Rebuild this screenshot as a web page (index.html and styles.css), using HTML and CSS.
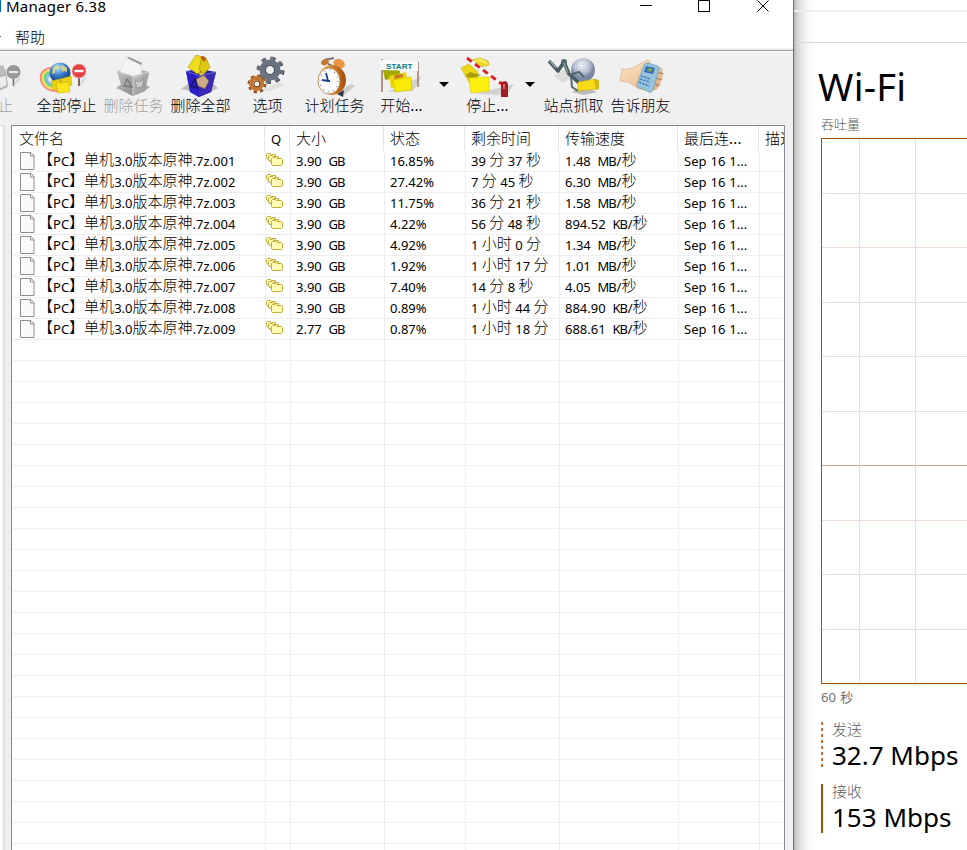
FILE: index.html
```html
<!DOCTYPE html>
<html lang="zh-CN">
<head>
<meta charset="utf-8">
<title>Manager 6.38</title>
<link rel="stylesheet" href="styles.css">
</head>
<body>
<div class="desktop">
<main class="window">
  <header class="titlebar">
    <i class="app-edge"></i><span class="title">Manager 6.38</span>
    <svg class="controls" width="130" height="16" viewBox="637 0 130 16" fill="none" stroke="#000" shape-rendering="crispEdges"><path d="M640 5.5h12M698.500 .5h11v11h-11z"/><path d="M757.500 .5l11 11M768.500 .5l-11 11" shape-rendering="auto"/></svg>
  </header>
  <nav class="menu"><i class="menu-edge"></i><span>帮助</span></nav>
  <div class="toolbar">
    <div class="tool cut disabled">
      <svg viewBox="0 55 33 44"><path d="M-4 67l7-2 3 6 2 16-9 4z" fill="#bbb"/><path d="M-1 77l7-2 1 10-7 4z" fill="#eee" stroke="#999" stroke-width=".6"/><path d="M13.500 77v9" stroke="#666" stroke-width="1.600"/><path d="M14 85l6-7" stroke="#d5d5d5" stroke-width="2"/><circle cx="13.500" cy="72" r="7" fill="#999"/><path d="M9 72h9" stroke="#e8e8e8" stroke-width="2.200"/></svg>
      <span>止</span>
    </div>
    <div class="tool">
      <svg viewBox="33 55 67 44"><defs><radialGradient id="globe" cx=".4" cy=".25" r=".7"><stop stop-color="#b9e4ff"/><stop offset=".5" stop-color="#3c82d2"/><stop offset="1" stop-color="#123879"/></radialGradient></defs><g fill="none" stroke-width="2.300"><path d="M55 68c-9-1-15 4-14 11 1 8 8 12 17 12" stroke="#f58c7c"/><path d="M55 70c-8-1-13 3-12 9 1 7 7 10 15 10" stroke="#f5e35c"/><path d="M55 72c-6-1-11 2-10 7 1 5 6 8 13 8" stroke="#72d36b"/><path d="M55 74c-5 0-8 1-8 5s5 7 11 7" stroke="#78bfe9"/></g><circle cx="60" cy="73" r="10.500" fill="url(#globe)"/><path d="M53 68q2-3 5-3l1 3-4 2 0 3-3 1zM63 65l4 3 0 4-3-1-2 1 0-3-2-2z" fill="#e3d982" fill-opacity=".85"/><path d="M51 81l9-2 1 9-8 2zM60 79l11-3 1 9-9 3z" fill="#e9cf13" stroke="#c0a500" stroke-width=".5"/><path d="M56 83l13-1 1 10-12 1z" fill="#f9e51b" stroke="#c7aa00" stroke-width=".5"/><path d="M80 85l6-8" stroke="#d5d5d5" stroke-width="2"/><path d="M79 77v9" stroke="#63443c" stroke-width="1.600"/><circle cx="79" cy="71" r="7" fill="#e54045" stroke="#f1a8a4" stroke-width=".7"/><path d="M74.500 71h9" stroke="#fff" stroke-width="2.400"/></svg>
      <span>全部停止</span>
    </div>
    <div class="tool disabled">
      <svg viewBox="100 55 67 44"><defs><linearGradient id="bin" y2="1"><stop stop-color="#c2c2c2"/><stop offset="1" stop-color="#8a8a8a"/></linearGradient></defs><path d="M116 88l7 3v-8zM144 84l6 3-7 5z" fill="#aaa"/><path d="M117 71l15-3 17 4-4 19-12 5-10-5z" fill="#aaa"/><path d="M120 70l7-13 14 6 1 13-9 3-13-5z" fill="#f4f4f4" stroke="#d2d2d2" stroke-width=".6"/><path d="M127 58l2-1 13 6-1 2z" fill="#999"/><path d="M117 71l16 5v20l-10-5z" fill="url(#bin)" fill-opacity=".9"/><path d="M133 76l16-4-4 19-12 5z" fill="url(#bin)" fill-opacity=".85"/><path d="M117 71l16 5 16-4M133 76v20" fill="none" stroke="#dedede" stroke-width=".8"/><path d="M124 86l3-7 5 8z" fill="none" stroke="#777" stroke-width="1.400"/><path d="M135 81l5 1 4-4-2 9-5 1z" fill="#ccc" stroke="#858585" stroke-width=".6"/></svg>
      <span>删除任务</span>
    </div>
    <div class="tool">
      <svg viewBox="167 55 67 44"><path d="M181 89l9 2-2-7zM212 83l6 5-7 4z" fill="#bbb"/><path d="M186 71l14-2 16 3-5 20-12 5-9-5z" fill="#2a269f"/><path d="M188 67l8-12 10 3-5 13-4 3z" fill="#eedc1c" stroke="#a08b00" stroke-width=".5"/><path d="M202 57l4 1 4 9-5 6-3 0-3-4z" fill="#e0c810" stroke="#8d7900" stroke-width=".5"/><path d="M200 57l4-1 2 4-2 2z" fill="#c2591a"/><path d="M186 71l13 5v21l-9-5z" fill="#2b20cb" fill-opacity=".96"/><path d="M199 76l17-4-5 20-12 5z" fill="#392bb8" fill-opacity=".96"/><path d="M197 72l4 4 4-3z" fill="#e6d219"/><path d="M186 71l13 5 17-4" fill="none" stroke="#7b76df" stroke-width=".8"/><path d="M191 86l4-7 3 9z" fill="none" stroke="#16105d" stroke-width="1.500"/><path d="M196 79l8-4 5 6-4 8-7-3z" fill="#cdab83" stroke="#5a456a" stroke-width=".7"/></svg>
      <span>删除全部</span>
    </div>
    <div class="tool">
      <svg viewBox="234 55 67 44"><path d="M259 91l21-9 6 3-17 6z" fill="#e0e0e0"/><g fill="none"><circle cx="271" cy="70.500" r="11.500" stroke="#454d57" stroke-width="4" stroke-dasharray="4 5.030"/><circle cx="270" cy="70" r="11.500" stroke="#69727e" stroke-width="4" stroke-dasharray="4 5.030"/><circle cx="270" cy="70" r="7.500" stroke="#69727e" stroke-width="6"/><circle cx="270" cy="70" r="4.500" stroke="#424952"/><circle cx="257" cy="84" r="8" stroke="#9b531e" stroke-width="3" stroke-dasharray="3.140 3.140"/><circle cx="256.500" cy="83.500" r="5.300" stroke="#c27532" stroke-width="4.500"/><circle cx="257" cy="84" r="3" stroke="#674022"/></g></svg>
      <span>选项</span>
    </div>
    <div class="tool">
      <svg viewBox="301 55 67 44"><defs><linearGradient id="brass"><stop stop-color="#ffc15d"/><stop offset="1" stop-color="#a54b0b"/></linearGradient></defs><path d="M337 93l14-9 4 2-11 9z" fill="#ccc"/><path d="M337 94l6 3 1-7z" fill="#333844"/><path d="M324 60l10-2M328 64l7 3" stroke="#777" stroke-width="2"/><ellipse cx="324.500" cy="62" rx="4" ry="3" fill="#c47632" transform="rotate(-25 325 61)"/><ellipse cx="339" cy="64" rx="6" ry="4.500" fill="#e99545" transform="rotate(25 340 64)"/><ellipse cx="332" cy="80" rx="14" ry="15" fill="url(#brass)"/><ellipse cx="329" cy="81" rx="11" ry="13" fill="#fff" stroke="#b57b4c" stroke-width=".8"/><ellipse cx="329" cy="81" rx="9" ry="11" fill="none" stroke="#777784" stroke-width="1.200" stroke-dasharray="1 4.270"/><path d="M326 73l2 8-6-1M327 81h3" fill="none" stroke="#173f93" stroke-width="1.800"/></svg>
      <span>计划任务</span>
    </div>
    <div class="tool">
      <svg viewBox="368 55 67 44"><path d="M387 92l35-16-9 15z" fill="#d2d2d2"/><path d="M383 70l16-3 2 10-16 3z" fill="#a3a900"/><path d="M389 76l17-4 2 13-17 3z" fill="#e9d513"/><path d="M395 75l8-1v3l-9 2z" fill="#c17a1f"/><path d="M393 80l18-3 1 13-17 2z" fill="#f9ea08" stroke="#cdb700" stroke-width=".6"/><path d="M382 59v33M418 62v25" stroke="#a98571" stroke-width="1.700"/><path d="M380 60l38 2v9l-37-1z" fill="#f8fbfb"/><text x="386" y="69" class="banner">START</text></svg>
      <span class="latin-dots">开始<em>...</em></span>
    </div>
    <div class="drop"></div>
    <div class="tool wide">
      <svg viewBox="454 55 67 44"><path d="M475 94l39-10-7 11z" fill="#d2d2d2"/><path d="M472 60l8-2 8 3 1 4-9 2z" fill="#e9da25" stroke="#c5b416" stroke-width=".7"/><path d="M475 61l4-1 8 4M479 59l8 3" fill="none" stroke="#fff778"/><path d="M461 68l8-4 9 8-1 8-8 2z" fill="#ead815" stroke="#c5b416" stroke-width=".6"/><path d="M465 76l5-4 11 3-9 4z" fill="#a99d0a"/><path d="M469 78l20-1v14l-18 2z" fill="#fff00e" stroke="#d5c600" stroke-width=".6"/><path d="M467 58l36 27" stroke="#fff" stroke-width="3"/><path d="M467 58l36 27" stroke="#d9262b" stroke-width="3" stroke-dasharray="6 4"/><path d="M501 82l5-1 2 3v13h-7z" fill="#a11b22"/><path d="M503 84h2v5h-2z" fill="#d66"/></svg>
      <span class="latin-dots">停止<em>...</em></span>
    </div>
    <div class="drop right"></div>
    <div class="tool">
      <svg viewBox="540 55 67 44"><defs><radialGradient id="ball" cx=".45" cy=".3"><stop stop-color="#f5f9ff"/><stop offset=".7" stop-color="#b3bdd1"/><stop offset="1" stop-color="#7b86a0"/></radialGradient><pattern id="dimples" width="3" height="3" patternUnits="userSpaceOnUse"><circle cx="1" cy="1" r=".5" fill="#909bb4"/></pattern></defs><path d="M554 76l12-7 8 8-12 6z" fill="#ddd"/><circle cx="583" cy="70" r="12" fill="url(#ball)"/><circle cx="583" cy="70" r="11.500" fill="url(#dimples)"/><path d="M572 92l9-6 16 6-13 3z" fill="#bbb"/><path d="M549 61l9 10 6-9 5 12 10 9" fill="none" stroke="#475a60" stroke-width="3.600" stroke-linejoin="round"/><circle cx="564" cy="62" r="3" fill="#526b70"/><path d="M564 63l4 10M550 61l6 7" stroke="#8fa5a6" stroke-width="1.200"/><path d="M569 75l10-3 5 5M571 77l1 10 6 4" fill="none" stroke="#526b70" stroke-width="2"/><path d="M578 82l18-3 1 10-19 2z" fill="#f7db17" stroke="#c2a918" stroke-width=".6"/><path d="M594 79l5 1v9l-3 1z" fill="#d1b719"/></svg>
      <span>站点抓取</span>
    </div>
    <div class="tool">
      <svg viewBox="607 55 67 44"><defs><linearGradient id="skin" y2="1"><stop stop-color="#ffe8c7"/><stop offset="1" stop-color="#dfac80"/></linearGradient></defs><path d="M622 69q9 1 14-3l9-5q4-2 5 1l-2 6 13 0q2 1 1 4 2 2 0 4 1 3-2 5 1 4-2 5 0 4-5 4l-14-1-11-7-8-1z" fill="url(#skin)" stroke="#d5a77e" stroke-width=".6"/><path d="M656 72l7 2M656 78l6 2M655 84l4 2" stroke="#b6764f" stroke-width="1.300"/><path d="M644 65q1-2 4-2l10 3q2 1 1 4l-6 20q-1 3-4 2l-11-5q-2-1-1-3z" fill="#98c4d9" stroke="#6f9cb2" stroke-width=".7"/><path d="M646 66l9 2-2 6-9-2z" fill="#3268c0"/><path d="M648 68l5 1-2 3-4-1z" fill="#7faa43"/><path d="M641 76l10 3M640 79l10 3M639 82l10 4" stroke="#437fc8" stroke-width="1.600" stroke-dasharray="2.400 1"/></svg>
      <span>告诉朋友</span>
    </div>
  </div>
  <section class="content">
    <aside class="side"></aside>
    <div class="list" id="list">
      <div class="head"><span>文件名</span><span class="q">Q</span><span>大小</span><span>状态</span><span>剩余时间</span><span>传输速度</span><span>最后连<em>...</em></span><span>描述</span></div>
    </div>
  </section>
</main>
<section class="monitor">
  <div class="strip"></div>
  <div class="panel">
    <h1>Wi-Fi</h1>
    <div class="label">吞吐量</div>
    <div class="chart"><i></i><i></i><i></i><i></i><i></i><i></i><i></i><i></i><i></i><i></i><i></i><i></i><i></i><i></i><i></i><i></i><i></i><i></i><i></i><i></i><i></i><i></i><i></i><i></i><i></i><i></i><i></i><i></i><i></i><i></i></div>
    <div class="axis">60 秒</div>
    <div class="stat send"><span>发送</span><strong>32.7 Mbps</strong></div>
    <div class="stat recv"><span>接收</span><strong>153 Mbps</strong></div>
  </div>
</section>
</div>
<script src="app.js"></script>
</body>
</html>
```
FILE: styles.css
```css
* { box-sizing: border-box; }
body { margin: 0; overflow: hidden; background: #fff; color: #000; font-family: "Noto Sans", "Noto Sans CJK SC", sans-serif; }
i, em { font-style: normal; }
.desktop { display: flex; width: 967px; height: 850px; overflow: hidden; }
.window { width: 794px; height: 850px; border-right: 1px solid #707070; background: #f0f0f0; flex: none; display: flex; flex-direction: column; }
.titlebar { height: 24px; background: #fff; display: flex; align-items: flex-start; flex: none; }
.app-edge { width: 1px; height: 12px; background: #0067c0; margin-right: 5px; }
.title { font-size: 15px; line-height: 20px; margin-top: -4px; letter-spacing: .25px; white-space: pre; }
.controls { margin-left: auto; margin-right: 26px; overflow: visible; }
.menu { height: 24px; background: #fff; display: flex; flex: none; font: 300 15px/26px "Noto Sans CJK SC", sans-serif; }
.menu-edge { width: 1px; height: 1px; margin: 12px 14px 0 0; background: #555; }
.toolbar { height: 75px; margin-top: 2px; border-top: 1px solid #9a9a9a; box-shadow: inset 0 1px #fff; display: flex; padding-top: 4px; flex: none; }
.tool { width: 67px; flex: none; text-align: center; font: 300 15px/20px "Noto Sans CJK SC", sans-serif; white-space: nowrap; }
.tool svg { display: block; width: 67px; height: 44px; margin-bottom: -4px; }
.tool.cut { width: 33px; text-align: left; }
.tool.cut svg { width: 33px; }
.tool.cut span { margin-left: -2px; }
.tool.disabled span { color: #a0a0a0; }
.latin-dots em, .head em { font: 15px "Noto Sans", sans-serif; letter-spacing: .2px; }
.banner { font: bold 8px "Liberation Sans", sans-serif; fill: #167879; letter-spacing: .1px; }
.drop { width: 19px; padding: 27px 0 0 4px; flex: none; }
.drop::before { content: ""; display: block; width: 0; border: 5px solid transparent; border-top-color: #000; border-bottom: 0; }
.content { flex: 1; display: flex; min-height: 0; }
.side { width: 5px; margin-right: 6px; border: solid #dcdcdc; border-width: 1px 1px 0 0; background: linear-gradient(90deg, #fff 2px, #ececec 2px); flex: none; }
.list { width: 774px; border: solid #828790; border-width: 1px 1px 0; background: #fff; overflow: hidden; }
.head, .row { display: grid; grid-template-columns: 254px 25px 94px 81px 94px 119px 81px 24px; }
.head { height: 25px; margin-left: -1px; font: 300 15px/24px "Noto Sans CJK SC", sans-serif; }
.head span { border-right: 1px solid #e5e5e5; padding-left: 6px; white-space: nowrap; overflow: hidden; }
.head span:first-child { padding-left: 8px; }
.head .q { font: 13px/27px "Noto Sans", sans-serif; padding-left: 6px; }
.head span:last-child { width: 25px; border: 0; padding-left: 6px; }
.row { height: 21px; margin-left: 1px; grid-template-columns: 253px 25px 94px 81px 94px 119px 81px 23px; }
.row > span { border: solid #eee; border-width: 0 1px 1px 0; padding-left: 5px; font-size: 13px; line-height: 20px; height: 21px; white-space: pre; overflow: hidden; }
.row > span:last-child { border-right: 0; }
.row > .date { word-spacing: .6px; }
.row .file { display: flex; padding-left: 7px; }
.file svg { margin: 1px 2px 0 0; flex: none; }
.row .queue { padding: 2px 0 0; }
.queue svg { display: block; }
.cjk { font-family: "Noto Sans CJK SC", sans-serif; font-weight: 300; font-size: 15px; line-height: 18px; position: relative; top: -1px; }
.unit { letter-spacing: -1.1px; margin-right: 1px; }
.monitor { flex: 1; background: linear-gradient(90deg, #b5b5b5, #d2d2d2 3px, #e8e8e8 8px, #f9f9f9 15px, #fff 22px); overflow: hidden; }
.strip { height: 43px; border-bottom: 1px solid #d9d9d9; background: linear-gradient(#eee, #eee) 0 10px / 100% 2px no-repeat; }
.panel { padding-left: 27px; }
.panel h1 { font-size: 38px; line-height: 50px; font-weight: 400; margin: 18px 0 0 -3px; letter-spacing: .3px; height: 54px; }
.label { font: 300 13px/18px "Noto Sans CJK SC", sans-serif; color: #606060; height: 23px; }
.chart { width: 170px; height: 546px; border: 1px solid #a34e09; display: grid; grid-template-columns: 38px 56px 75px; grid-template-rows: 55px 54px 55px 54px 55px 54px 55px 54px 55px 53px; }
.chart i { border: solid #eaddd3; border-width: 0 1px 1px 0; }
.chart i:nth-child(n+16):nth-child(-n+18) { border-bottom-color: #d0a888; }
.chart i:nth-child(n+28) { border-bottom: 0; }
.axis { font-size: 13px; line-height: 18px; color: #707070; margin-top: 4px; height: 34px; word-spacing: 1px; }
.stat { position: relative; height: 49px; padding-left: 11px; margin-bottom: 13px; }
.stat::before { content: ""; position: absolute; left: 0; top: 0; width: 2px; height: 49px; background: #a34e09; }
.send::before { height: 46px; background: repeating-linear-gradient(#e06a32 0 3px, transparent 3px 6px); }
.stat span { display: block; font: 300 15px/14px "Noto Sans CJK SC", sans-serif; color: #606060; padding-bottom: 2px; }
.stat strong { display: block; font-size: 26px; line-height: 34px; font-weight: 400; white-space: nowrap; }
```
FILE: app.js
```js
const files = [
  ["3.90", "16.85%", "39 分 37 秒", "1.48  MB"],
  ["3.90", "27.42%", "7 分 45 秒", "6.30  MB"],
  ["3.90", "11.75%", "36 分 21 秒", "1.58  MB"],
  ["3.90", "4.22%", "56 分 48 秒", "894.52  KB"],
  ["3.90", "4.92%", "1 小时 0 分", "1.34  MB"],
  ["3.90", "1.92%", "1 小时 17 分", "1.01  MB"],
  ["3.90", "7.40%", "14 分 8 秒", "4.05  MB"],
  ["3.90", "0.89%", "1 小时 44 分", "884.90  KB"],
  ["2.77", "0.87%", "1 小时 18 分", "688.61  KB"]
];
const page = '<svg width="16" height="19" viewBox="0 0 16 19"><path d="M.5 .5h10.500l3 3v14h-13.500z" fill="#f8fafb" stroke="#8e8e8e"/><path d="M10.500 1v3h3.500" fill="none" stroke="#8e8e8e"/></svg>';
const folders = '<svg width="17" height="15" viewBox="0 0 17 15" fill="#fffbb5" stroke="#c2ad3a"><path d="M.5 1.500l1-1h3l1 1h4v7h-6l-3-4z"/><path d="M2.500 3.500l1-1h3l1 1h5v6h-7l-3-3z"/><path d="M5.500 5.500l1-1h3l1 1h5l1 1v5l-1 1h-9l-1-1z"/></svg>';
const mark = text => text
  .replace(/[A-Z]{2}(?=\/|$)/g, '<span class="unit">$&</span>')
  .replace(/[\u3000-\u9fff]+/g, '<span class="cjk">$&</span>');
const cell = (html, cls = "") => `<span class="${cls}">${html}</span>`;
const rows = files.map(([size, status, time, speed], n) => [
  cell(page + "<span>" + mark(`【PC】单机3.0版本原神.7z.00${n + 1}`) + "</span>", "file"),
  cell(folders, "queue"), cell(mark(size + "  GB")), cell(status),
  cell(mark(time)), cell(mark(speed + "/秒")), cell("Sep 16 1...", "date"), cell("")
].join(""));
while (rows.length < 34) rows.push("<span></span>".repeat(8));
document.getElementById("list").insertAdjacentHTML("beforeend", rows.map(r => `<div class="row">${r}</div>`).join(""));
```
